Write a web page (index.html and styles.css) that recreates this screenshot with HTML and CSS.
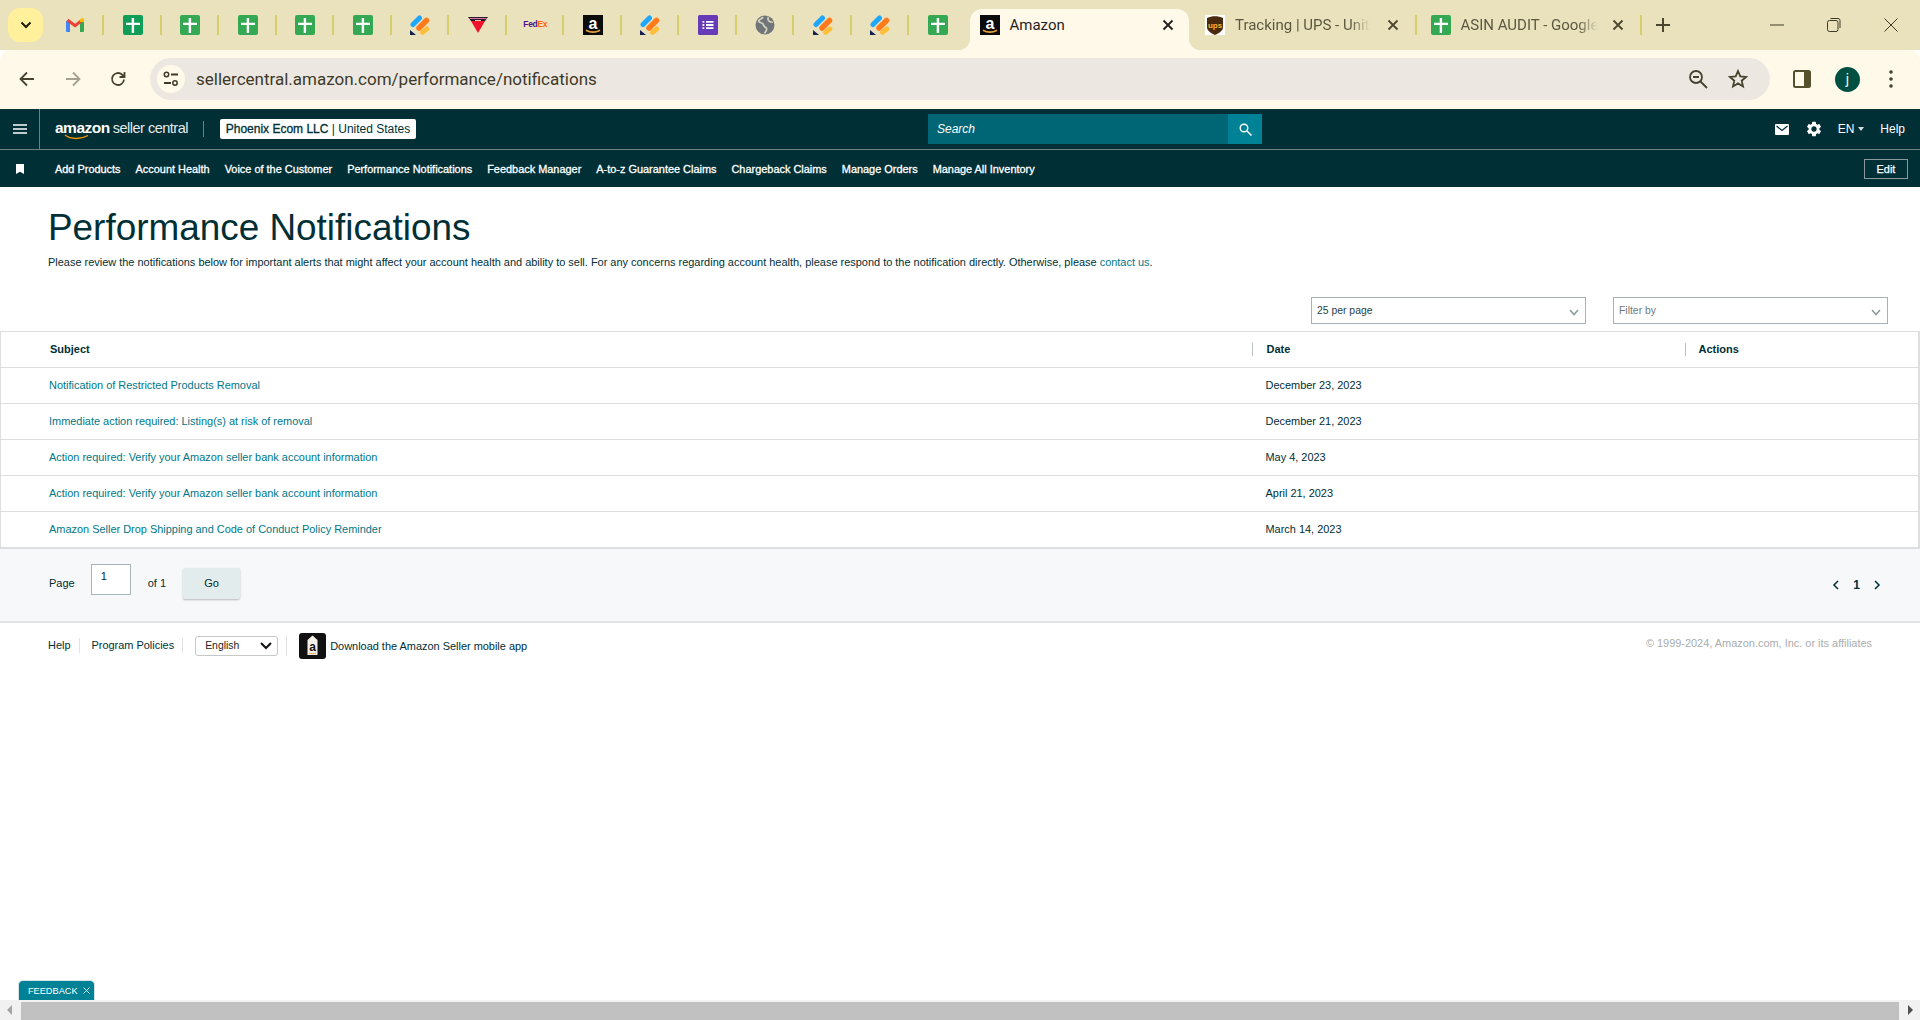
FILE: index.html
```html
<!DOCTYPE html>
<html lang="en">
<head>
<meta charset="utf-8">
<title>Amazon</title>
<link rel="stylesheet" href="styles.css">
</head>
<body>
<svg class="defs" width="0" height="0" aria-hidden="true">
  <symbol id="i-sheet" viewBox="0 0 20 20"><rect width="20" height="20" rx="2" fill="currentColor"/><path d="M8.700 3h2.400v4.700H17v2.400h-5.900V18H8.700v-7.900H3V7.700h5.700z" fill="#fff"/></symbol>
  <symbol id="i-task" viewBox="0 0 20 20"><path d="M3 9.500 9.500 3" stroke="#1ea7fd" stroke-width="5" stroke-linecap="round"/><path d="M9 13 16.500 5.500" stroke="#ff7a1a" stroke-width="5.500" stroke-linecap="round"/><path d="M12.500 17.300 16.800 14" stroke="#ffbf3c" stroke-width="5" stroke-linecap="round"/><path d="M0 15 6 20H0z" fill="#14204f"/></symbol>
</svg>

<header class="tabstrip">
  <button class="tabsearch"><svg width="14" height="14" viewBox="0 0 14 14"><path d="M2.500 4.500 7 9l4.500-4.500" fill="none" stroke="#1c1b10" stroke-width="2"/></svg></button>
  <div class="pin"><svg width="18" height="14" viewBox="0 0 18 14"><path d="M0 3h4v11H1a1 1 0 0 1-1-1z" fill="#4285f4"/><path d="M14 3h4v10a1 1 0 0 1-1 1h-3z" fill="#34a853"/><path d="M1.500 2 9 7.700 16.500 2" fill="none" stroke="#ea4335" stroke-width="3"/><path d="M14 4V1.500L16 .3a1.300 1.300 0 0 1 2 1V4z" fill="#fbbc04"/></svg></div>
  <div class="pin sheet-dark"><svg class="ic"><use href="#i-sheet"/></svg></div>
  <div class="pin sheet"><svg class="ic"><use href="#i-sheet"/></svg></div>
  <div class="pin sheet"><svg class="ic"><use href="#i-sheet"/></svg></div>
  <div class="pin sheet"><svg class="ic"><use href="#i-sheet"/></svg></div>
  <div class="pin sheet"><svg class="ic"><use href="#i-sheet"/></svg></div>
  <div class="pin"><svg class="ic"><use href="#i-task"/></svg></div>
  <div class="pin"><svg class="ic" viewBox="0 0 20 20"><path d="M0 2h20l-3 4H3z" fill="#231a2c"/><path d="M3 6h14l-7 12z" fill="#f0122d"/><path d="M1.500 3.500h17" stroke="#e56fa6" stroke-width="1"/><path d="M7 5.500h6" stroke="#e9c9a0" stroke-width="1"/></svg></div>
  <div class="pin"><span class="fedex"><b class="fed">Fed</b><b class="ex">Ex</b></span></div>
  <div class="pin"><svg class="ic" viewBox="0 0 20 20"><rect width="20" height="20" fill="#0b0b0b"/><text x="10" y="13.600" text-anchor="middle" font-family="Liberation Sans" font-weight="700" font-size="16" fill="#fff">a</text><path d="M3 15.200c4.500 2.600 9.500 2.600 14 0" stroke="#e8a33d" stroke-width="1.700" fill="none"/></svg></div>
  <div class="pin"><svg class="ic"><use href="#i-task"/></svg></div>
  <div class="pin"><svg class="ic" viewBox="0 0 20 20"><rect width="20" height="20" rx="1.500" fill="#673ab7"/><path d="M4.500 6h1.800v1.800H4.500zM8 6h7.500v1.800H8zM4.500 9.100h1.800v1.800H4.500zM8 9.100h7.500v1.800H8zM4.500 12.200h1.800V14H4.500zM8 12.200h7.500V14H8z" fill="#fff"/></svg></div>
  <div class="pin"><svg class="ic" viewBox="0 0 20 20"><circle cx="10" cy="10" r="9.500" fill="#70757a"/><path d="M8 2C7 4 4 4 3.500 6c1 2 3.500 1.500 4.500 3s.5 2 2 3 2 1 1.500 3-1.500 2-2 3.500M13.500 2c-1 2-.5 3.500 1 4.500s2.500 0 3.500 1" fill="none" stroke="#d3d0bb" stroke-width="1.700"/></svg></div>
  <div class="pin"><svg class="ic"><use href="#i-task"/></svg></div>
  <div class="pin"><svg class="ic"><use href="#i-task"/></svg></div>
  <div class="pin no-sep"><svg class="ic"><use href="#i-sheet"/></svg></div>

  <div class="tab active">
    <svg class="ic" viewBox="0 0 20 20"><rect width="20" height="20" fill="#0b0b0b"/><text x="10" y="13.600" text-anchor="middle" font-family="Liberation Sans" font-weight="700" font-size="16" fill="#fff">a</text><path d="M3 15.200c4.500 2.600 9.500 2.600 14 0" stroke="#e8a33d" stroke-width="1.700" fill="none"/></svg>
    <span class="tab-title">Amazon</span>
    <svg class="tab-x" width="12" height="12" viewBox="0 0 12 12"><path d="M1.500 1.500l9 9m0-9-9 9" stroke="#1f1f1f" stroke-width="1.800"/></svg>
  </div>
  <div class="tab ups">
    <svg class="ic" viewBox="0 0 20 20"><rect width="20" height="20" fill="#fff"/><path d="M2 3c5-2.500 11-2.500 16 0v9c0 4-4 6-8 8-4-2-8-4-8-8z" fill="#4a2a0e"/><text x="10" y="13" text-anchor="middle" font-family="Liberation Sans" font-weight="700" font-size="8" fill="#f5b52b">ups</text></svg>
    <span class="tab-title fade">Tracking | UPS - Unit</span>
    <svg class="tab-x" width="12" height="12" viewBox="0 0 12 12"><path d="M1.500 1.500l9 9m0-9-9 9" stroke="#4b4630" stroke-width="1.800"/></svg>
  </div>
  <div class="tab asin">
    <svg class="ic sheet"><use href="#i-sheet"/></svg>
    <span class="tab-title fade">ASIN AUDIT - Google</span>
    <svg class="tab-x" width="12" height="12" viewBox="0 0 12 12"><path d="M1.500 1.500l9 9m0-9-9 9" stroke="#4b4630" stroke-width="1.800"/></svg>
  </div>
  <svg class="newtab" width="14" height="14" viewBox="0 0 14 14"><path d="M7 0v14M0 7h14" stroke="#4b4630" stroke-width="2"/></svg>
  <div class="winctl">
    <svg width="14" height="14" viewBox="0 0 14 14"><path d="M0 7h14" stroke="#3d3a28" stroke-width="1"/></svg>
    <svg width="14" height="14" viewBox="0 0 14 14"><rect x=".5" y="2.500" width="10.500" height="11" rx="2" fill="none" stroke="#3d3a28"/><path d="M3.500.5H11a2 2 0 0 1 2 2V10" fill="none" stroke="#3d3a28"/></svg>
    <svg width="14" height="14" viewBox="0 0 14 14"><path d="M.5.5l13 13m0-13-13 13" stroke="#3d3a28" stroke-width="1"/></svg>
  </div>
</header>

<div class="toolbar">
  <svg class="tb" viewBox="0 0 16 16" width="16" height="16"><path d="M15 8H2m6-6.500L1.500 8 8 14.500" fill="none" stroke="#47422e" stroke-width="1.800"/></svg>
  <svg class="tb" viewBox="0 0 16 16" width="16" height="16"><path d="M1 8h13M8 1.500 14.500 8 8 14.500" fill="none" stroke="#a5a18e" stroke-width="1.800"/></svg>
  <svg class="tb" viewBox="0 0 16 16" width="16" height="16"><path d="M14 8.500A6 6 0 1 1 12 3.500L14 5.500M14.500 1v5h-5" fill="none" stroke="#47422e" stroke-width="1.800"/></svg>
  <div class="omni">
    <span class="tune"><svg width="16" height="16" viewBox="0 0 16 16"><circle cx="3.500" cy="3.500" r="2.200" fill="none" stroke="#3d3a28" stroke-width="1.500"/><path d="M8 3.500h7M1 12h7" stroke="#3d3a28" stroke-width="1.800"/><circle cx="12" cy="12" r="2.200" fill="none" stroke="#3d3a28" stroke-width="1.500"/></svg></span>
    <span class="url">sellercentral.amazon.com/performance/notifications</span>
    <svg class="zoomout" width="20" height="20" viewBox="0 0 20 20"><circle cx="8" cy="8" r="6" fill="none" stroke="#47422e" stroke-width="1.800"/><path d="M5 8h6M12.500 12.500 19 19" stroke="#47422e" stroke-width="1.800"/></svg>
    <svg class="star" width="20" height="20" viewBox="0 0 20 20"><path d="M10 2l2.300 5.400 5.800.5-4.400 3.800 1.300 5.700L10 14.400l-5 3 1.300-5.700L1.900 7.900l5.800-.5z" fill="none" stroke="#47422e" stroke-width="1.800"/></svg>
  </div>
  <svg class="panel" width="18" height="18" viewBox="0 0 18 18"><rect x="1" y="1" width="16" height="16" rx="1.500" fill="none" stroke="#57502f" stroke-width="2"/><rect x="11" y="1" width="6" height="16" fill="#57502f"/></svg>
  <span class="avatar">j</span>
  <svg class="dots" width="4" height="20" viewBox="0 0 4 20"><circle cx="2" cy="3" r="1.800" fill="#47422e"/><circle cx="2" cy="10" r="1.800" fill="#47422e"/><circle cx="2" cy="17" r="1.800" fill="#47422e"/></svg>
</div>

<nav class="sc-nav">
  <div class="sc-top">
    <div class="burger"><svg width="14" height="10" viewBox="0 0 14 10"><path d="M0 1h14M0 5h14M0 9h14" stroke="#fff" stroke-width="1.500"/></svg></div>
    <div class="brand">
      <span class="brand-amz">amazon</span><span class="brand-sc">seller central</span>
      <svg class="smile" width="26" height="6" viewBox="0 0 26 6"><path d="M1 1c6 4.500 16 4.500 23 .5" fill="none" stroke="#f90" stroke-width="1.400"/></svg>
    </div>
    <div class="brand-sep"></div>
    <div class="account"><span class="acct-name">Phoenix Ecom LLC</span> | United States</div>
    <div class="search">
      <span class="search-text">Search</span>
      <span class="search-btn"><svg width="13" height="13" viewBox="0 0 13 13"><circle cx="5" cy="5" r="3.800" fill="none" stroke="#fff" stroke-width="1.400"/><path d="M8 8l4.500 4.500" stroke="#fff" stroke-width="1.500"/></svg></span>
    </div>
    <div class="top-right">
      <svg width="14" height="11" viewBox="0 0 14 11"><rect width="14" height="11" rx="1" fill="#fff"/><path d="M1.500 2 7 6.500 12.500 2" fill="none" stroke="#002f36" stroke-width="1.300"/></svg>
      <svg class="gear" width="18" height="18" viewBox="0 0 24 24"><path fill="#fff" d="M19.140 12.940c.04-.3.06-.61.06-.94 0-.32-.02-.64-.07-.94l2.030-1.580c.18-.14.23-.41.12-.61l-1.920-3.320c-.12-.22-.37-.29-.59-.22l-2.390.96c-.5-.38-1.030-.7-1.620-.94l-.36-2.540c-.04-.24-.24-.41-.48-.41h-3.840c-.24 0-.43.17-.47.41l-.36 2.540c-.59.24-1.130.57-1.620.94l-2.390-.96c-.22-.08-.47 0-.59.22L2.740 8.870c-.12.21-.08.47.12.61l2.030 1.580c-.05.3-.09.63-.09.94s.02.64.07.94l-2.030 1.580c-.18.14-.23.41-.12.61l1.920 3.320c.12.22.37.29.59.22l2.390-.96c.5.38 1.030.7 1.620.94l.36 2.540c.05.24.24.41.48.41h3.840c.24 0 .44-.17.47-.41l.36-2.540c.59-.24 1.130-.56 1.620-.94l2.390.96c.22.08.47 0 .59-.22l1.920-3.320c.12-.22.07-.47-.12-.61l-2.010-1.580zM12 15.600c-1.980 0-3.600-1.620-3.600-3.600s1.620-3.600 3.600-3.600 3.600 1.620 3.600 3.600-1.620 3.600-3.600 3.600z"/></svg>
      <span class="lang">EN<i class="caret"></i></span>
      <span class="help">Help</span>
    </div>
  </div>
  <div class="sc-links">
    <svg class="bookmark" width="8" height="10" viewBox="0 0 8 10"><path d="M0 0h8v10L4 7.800 0 10z" fill="#fff"/></svg>
    <a>Add Products</a><a>Account Health</a><a>Voice of the Customer</a><a>Performance Notifications</a><a>Feedback Manager</a><a>A-to-z Guarantee Claims</a><a>Chargeback Claims</a><a>Manage Orders</a><a>Manage All Inventory</a>
    <span class="edit">Edit</span>
  </div>
</nav>

<main class="main">
  <h1 class="title">Performance Notifications</h1>
  <p class="intro">Please review the notifications below for important alerts that might affect your account health and ability to sell. For any concerns regarding account health, please respond to the notification directly. Otherwise, please <a class="link">contact us</a>.</p>
  <div class="controls">
    <div class="dropdown"><span>25 per page</span><svg width="10" height="7" viewBox="0 0 10 7"><path d="M1 1l4 4.500L9 1" fill="none" stroke="#8b9a9c" stroke-width="1.500"/></svg></div>
    <div class="dropdown muted"><span>Filter by</span><svg width="10" height="7" viewBox="0 0 10 7"><path d="M1 1l4 4.500L9 1" fill="none" stroke="#8b9a9c" stroke-width="1.500"/></svg></div>
  </div>
  <table class="grid">
    <thead>
      <tr><th class="c-subject"><span>Subject</span></th><th class="c-date"><span class="th-sep">Date</span></th><th><span class="th-sep th-actions">Actions</span></th></tr>
    </thead>
    <tbody>
      <tr><td class="c-subject"><a class="link">Notification of Restricted Products Removal</a></td><td class="c-date">December 23, 2023</td><td></td></tr>
      <tr><td class="c-subject"><a class="link">Immediate action required: Listing(s) at risk of removal</a></td><td class="c-date">December 21, 2023</td><td></td></tr>
      <tr><td class="c-subject"><a class="link">Action required: Verify your Amazon seller bank account information</a></td><td class="c-date">May 4, 2023</td><td></td></tr>
      <tr><td class="c-subject"><a class="link">Action required: Verify your Amazon seller bank account information</a></td><td class="c-date">April 21, 2023</td><td></td></tr>
      <tr class="last-row"><td class="c-subject"><a class="link">Amazon Seller Drop Shipping and Code of Conduct Policy Reminder</a></td><td class="c-date">March 14, 2023</td><td></td></tr>
    </tbody>
  </table>
  <div class="pager">
    <span>Page</span>
    <span class="page-input">1</span>
    <span>of 1</span>
    <span class="go">Go</span>
    <div class="pages">
      <svg width="8" height="10" viewBox="0 0 8 10"><path d="M6 1 2 5l4 4" fill="none" stroke="#002f36" stroke-width="1.500"/></svg>
      <b>1</b>
      <svg width="8" height="10" viewBox="0 0 8 10"><path d="M2 1l4 4-4 4" fill="none" stroke="#002f36" stroke-width="1.500"/></svg>
    </div>
  </div>
  <footer class="foot">
    <span class="foot-item">Help</span>
    <span class="foot-item">Program Policies</span>
    <div class="foot-item foot-lang"><span class="langsel">English<svg width="12" height="8" viewBox="0 0 12 8"><path d="M1 1l5 5 5-5" fill="none" stroke="#111" stroke-width="2"/></svg></span></div>
    <svg class="app" width="27" height="26" viewBox="0 0 27 26"><rect width="27" height="26" rx="3" fill="#111"/><path d="M8.500 7l5-4.500 5 4.500v15h-10z" fill="#f4f1ea"/><text x="13.500" y="18" text-anchor="middle" font-family="Liberation Sans" font-weight="700" font-size="12" fill="#111">a</text><path d="M10 20c2 1 5 1 7 0" stroke="#e8a33d" fill="none"/></svg>
    <span class="app-text">Download the Amazon Seller mobile app</span>
    <span class="copy">© 1999-2024, Amazon.com, Inc. or its affiliates</span>
  </footer>
</main>

<div class="feedback">FEEDBACK <svg width="7" height="7" viewBox="0 0 7 7"><path d="M.5.5l6 6m0-6-6 6" stroke="#d5eef2" stroke-width="1"/></svg></div>
<div class="hscroll">
  <svg class="sb-arrow" width="20" height="20" viewBox="0 0 20 20"><path d="M12 5v10l-5-5z" fill="#a3a3a3"/></svg>
  <div class="thumb"></div>
  <svg class="sb-arrow" width="20" height="20" viewBox="0 0 20 20"><path d="M8 5v10l5-5z" fill="#505050"/></svg>
</div>
</body>
</html>
```
FILE: styles.css
```css
* { box-sizing: border-box; }
html, body { margin: 0; height: 100%; }
body {
  display: flex; flex-direction: column; height: 1020px; overflow: hidden; position: relative;
  font-family: "Liberation Sans", Arial, sans-serif; font-size: 11.2px; color: #002f36; background: #fff;
}
.defs { position: absolute; }
svg { display: block; flex: none; }
.ic { width: 20px; height: 20px; }

/* tab strip */
.tabstrip { height: 50px; flex: none; background: #e9e2bd; display: flex; align-items: flex-start; font-family: Roboto, "Open Sans", sans-serif; font-size: 15px; }
.tabsearch { width: 35px; height: 34px; margin: 8px 3.5px 0 8px; border: 0; padding: 0; border-radius: 12px; background: #fff19c; display: flex; align-items: center; justify-content: center; }
.pin { width: 57.5px; height: 20px; margin-top: 15px; display: flex; align-items: center; justify-content: center; border-right: 2px solid #d8cd6c; padding-left: 2px; }
.pin.no-sep { border-right: 0; padding-left: 0; color: #34a853; width: 57px; }
.sheet { color: #34a853; }
.sheet-dark { color: #0f9d58; }
.fedex { font-family: "Liberation Sans", sans-serif; font-size: 8.5px; letter-spacing: -.3px; margin-top: -3px; }
.fed { color: #4d148c; }
.ex { color: #ff6600; }
.tab { height: 41px; margin-top: 9px; display: flex; align-items: flex-start; padding-top: 6px; padding-left: 10px; position: relative; color: #5c573f; }
.tab.active { width: 219px; margin-left: 3.5px; background: #fff9ea; border-radius: 12px 12px 0 0; color: #1f1f1f; }
.tab.active::before, .tab.active::after { content: ""; position: absolute; bottom: 0; width: 12px; height: 12px; }
.tab.active::before { left: -12px; background: radial-gradient(circle at 0 0, transparent 12px, #fff9ea 12.5px); }
.tab.active::after { right: -12px; background: radial-gradient(circle at 100% 0, transparent 12px, #fff9ea 12.5px); }
.tab-title { margin-left: 10px; white-space: nowrap; line-height: 20px; }
.tab-x { margin: 4px 15px 0 auto; }
.fade { -webkit-mask-image: linear-gradient(to right, #000 85%, transparent 100%); mask-image: linear-gradient(to right, #000 85%, transparent 100%); }
.tab.ups { width: 228px; padding-left: 16.5px; }
.tab.ups::after, .tab.asin::after { content: ""; position: absolute; right: 0; top: 6px; width: 2px; height: 20px; background: #d8cd6c; }
.tab.asin { width: 225px; padding-left: 14px; }
.tab.ups .tab-x, .tab.asin .tab-x { margin-right: 18px; }
.newtab { margin: 18px 0 0 14px; }
.winctl { margin-left: auto; margin-top: 18px; display: flex; gap: 43px; padding-right: 22px; }

/* toolbar */
.toolbar { height: 59px; flex: none; background: #fff9ea; display: flex; align-items: center; padding: 0 26px 1px 19px; border-radius: 10px 10px 0 0; }
.tb { margin-right: 30px; }
.tb + .tb { margin-right: 29px; }
.tb + .tb + .tb { margin-right: 24px; }
.omni { height: 42px; flex: 0 0 1620px; border-radius: 21px; background: #ece8e1; display: flex; align-items: center; padding: 0 22px 0 7px; color: #3d3a28; }
.tune { width: 28px; height: 28px; border-radius: 50%; background: #fff9ea; display: flex; align-items: center; justify-content: center; }
.url { margin-left: 11px; font-family: Roboto, sans-serif; font-size: 17px; flex: 1; white-space: nowrap; }
.star { margin-left: 20px; }
.panel { margin-left: 23px; }
.avatar { width: 25px; height: 25px; border-radius: 50%; margin-left: 24px; background: #004f43; color: #fff; font-family: Roboto, sans-serif; font-size: 14px; text-align: center; line-height: 25px; flex: none; }
.dots { margin-left: 29px; }

/* seller central nav */
.sc-nav { height: 78px; flex: none; background: #002f36; color: #fff; display: flex; flex-direction: column; }
.sc-top { height: 41px; flex: none; border-bottom: 1px solid #6c7f82; display: flex; align-items: center; position: relative; }
.burger { width: 40px; height: 40px; display: flex; align-items: center; justify-content: center; border-right: 1px solid #6c7f82; }
.brand { margin-left: 15px; position: relative; font-size: 14.5px; white-space: nowrap; width: 134px; margin-top: -3px; letter-spacing: -.5px; }
.brand-amz { font-weight: 700; font-size: 15.5px; }
.brand-sc { margin-left: 3px; font-weight: 400; color: #e6ebeb; }
.smile { position: absolute; left: 9px; top: 15px; }
.brand-sep { width: 1px; height: 16px; margin-left: 14px; background: #6c7f82; }
.account { margin-left: 16px; height: 20px; width: 196px; background: #fff; border-radius: 2px; color: #002f36; font-size: 12px; line-height: 20px; text-align: center; white-space: nowrap; }
.acct-name { font-weight: 400; -webkit-text-stroke: .3px #002f36; }
.search { margin-left: 512px; width: 334px; height: 30px; background: #006574; display: flex; align-items: center; justify-content: space-between; padding-left: 9px; }
.search-text { font-style: italic; font-size: 12px; }
.search-btn { width: 34px; height: 30px; background: #008296; display: flex; align-items: center; justify-content: center; }
.top-right { margin-left: auto; display: flex; align-items: center; padding-right: 15px; font-size: 12px; }
.gear { margin-left: 16px; }
.lang { margin-left: 15px; display: flex; align-items: center; }
.caret { margin-left: 4px; border: 3.5px solid transparent; border-top: 4px solid #d5dddd; border-bottom: 0; }
.help { margin-left: 16px; }
.sc-links { flex: 1; display: flex; align-items: center; gap: 15px; padding-left: 16px; font-size: 10.93px; white-space: nowrap; }
.sc-links a { -webkit-text-stroke: .3px #fff; }
.bookmark { margin-right: 16px; }
.edit { margin-left: auto; margin-right: 12px; width: 44px; height: 20px; border: 1px solid #8a9a9c; text-align: center; line-height: 18px; -webkit-text-stroke: .25px #fff; }

/* main */
.main { flex: 1; min-height: 0; display: flex; flex-direction: column; }
.title { margin: 19px 0 0 48px; font-size: 36.9px; line-height: 44px; font-weight: 400; color: #002f36; }
.intro { margin: 5px 0 0 48px; line-height: 14px; color: #002f36; font-size: 10.96px; }
.link { color: #00778a; }
.controls { margin-top: 28px; display: flex; justify-content: flex-end; gap: 27px; padding-right: 32px; }
.dropdown { width: 275px; height: 27px; border: 1px solid #a6b3b4; display: flex; align-items: center; justify-content: space-between; padding: 0 6px 0 5px; font-size: 10.4px; color: #2b3f42; }
.dropdown span { margin-top: -1px; }
.dropdown svg { margin-top: 3px; }
.dropdown.muted { color: #6c7b7e; }
.grid { margin-top: 7px; width: 100%; table-layout: fixed; border-collapse: collapse; border: 1px solid #dcdedf; border-right-width: 2px; font-size: 10.95px; }
.grid tr { border-bottom: 1px solid #dcdedf; height: 36px; }
.grid th { text-align: left; font-weight: 700; font-size: 11px; padding: 0; }
.grid td { padding: 0 0 2px 14px; color: #002f36; }
.grid .c-subject { width: 1251px; padding-left: 48px; }
.grid th.c-subject { padding-left: 49px; padding-bottom: 1px; }
.grid .c-date { width: 433px; }
.grid td .link { color: #00778a; }
.grid .last-row td { padding-bottom: 0; }
.th-sep { display: inline-block; border-left: 1px solid #b9c0c1; padding-left: 14px; line-height: 13px; }
.th-sep.th-actions { padding-left: 13px; }
.grid tbody tr:last-child { border-bottom-width: 2px; }
.pager { height: 74px; flex: none; background: #f7f8fa; border-bottom: 2px solid #e3e4e7; display: flex; align-items: center; padding: 0 0 4px 49px; font-size: 11px; }
.page-input { margin-left: 16px; width: 40px; height: 31px; margin-top: -6px; border: 1px solid #a6b6b8; background: #fff; padding: 5px 0 0 9px; }
.page-input + span { margin-left: 17px; }
.go { margin-left: 17px; width: 57px; height: 31px; background: #e3ecec; border-radius: 2px; box-shadow: 0 1px 2px rgba(0,0,0,.25); text-align: center; line-height: 31px; margin-top: 2px; }
.pages { margin-left: auto; display: flex; align-items: center; gap: 13px; padding-right: 39px; font-size: 12px; color: #002f36; margin-top: 4px; }
.foot { height: 46px; flex: none; display: flex; align-items: center; padding: 0 48px; font-size: 10.95px; }
.foot-item { padding-right: 8px; border-right: 1px solid #e0e2e3; line-height: 15px; margin-right: 12px; }
.foot-item + .foot-item { margin-right: 12px; }
.foot-lang { display: flex; align-items: center; height: 20px; margin-right: 12px; padding-right: 8px; }
.langsel { width: 83px; height: 20px; border: 1px solid #c5c9ca; border-radius: 3px; display: flex; align-items: center; justify-content: space-between; padding: 0 5px 0 9px; font-size: 10.4px; color: #222; }
.app { margin-right: 4px; }
.copy { margin-left: auto; margin-top: -6px; color: #a9adae; font-size: 10.95px; }

.feedback { position: absolute; left: 18px; top: 980px; width: 77px; height: 20px; background: #008296; border: 1px solid #d7e3e5; border-bottom: 0; border-radius: 5px 5px 0 0; color: #fff; font-size: 9.2px; display: flex; align-items: center; gap: 5px; padding-left: 9px; }
.hscroll { margin-top: auto; height: 20px; flex: none; background: #f1f1f1; display: flex; }
.thumb { flex: 1; background: #c1c1c1; margin: 2px 1px 0; }
```
